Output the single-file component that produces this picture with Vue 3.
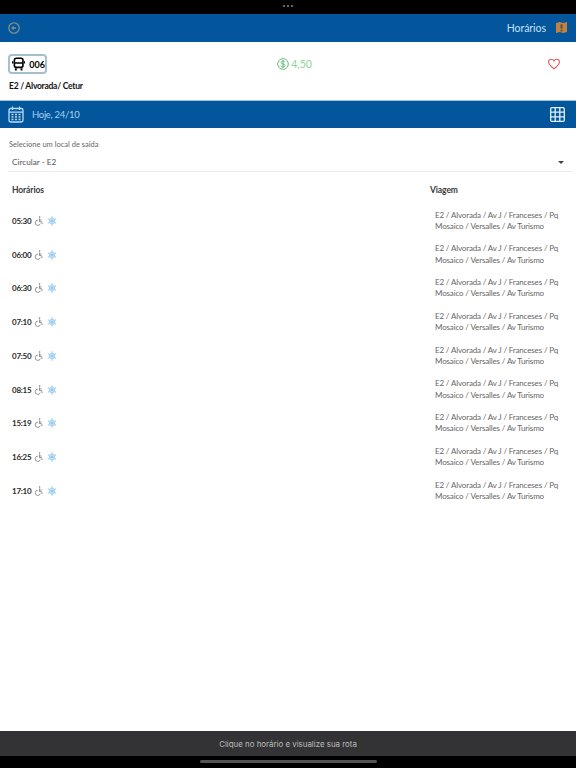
<script setup>
const times = ['05:30','06:00','06:30','07:10','07:50','08:15','15:19','16:25','17:10']
</script>

<template>
  <div class="page">
    <div class="status"><span class="dots"><i></i><i></i><i></i></span></div>
    <header class="nav">
      <svg class="back" width="12" height="12" viewBox="0 0 12 12" fill="none" stroke="#7f9088" stroke-width="1.300">
        <circle cx="6" cy="6" r="5.200"/>
        <path d="M8 6H4.200M5.600 4.500 4.100 6l1.500 1.500"/>
      </svg>
      <span class="nav-title">Horários</span>
      <svg width="11" height="11" viewBox="0 0 11 11">
        <path d="M0 1 3.600 0 7.400 1 11 0v10L7.400 11 3.600 10 0 11z" fill="#c2813f"/>
        <path d="M4.600 2.200h1.800v4.600H4.600zM4.600 7.800h1.800v1.600H4.600z" fill="#4a4f50"/>
      </svg>
    </header>

    <section class="route">
      <div class="route-top">
        <div class="badge">
          <svg width="14" height="14" viewBox="0 0 14 14" fill="none" stroke="#000" stroke-width="1.700">
            <rect x="2.500" y="1" width="9" height="9.500" rx="2"/>
            <path d="M2.500 6h9M.6 4v2.500M13.400 4v2.500"/>
            <path d="M3 12.600h2M9 12.600h2" stroke-width="2.200"/>
          </svg>
          <span>006</span>
        </div>
        <div class="price">
          <svg width="12" height="12" viewBox="0 0 12 12" fill="none" stroke="#62bd74" stroke-width="1">
            <circle cx="6" cy="6" r="5.300"/>
            <path d="M7.900 4.200C7.500 3.300 6.800 3 6 3c-1.100 0-1.900.6-1.900 1.500C4.100 6.400 8 5.500 8 7.500 8 8.400 7.100 9 6 9c-.9 0-1.700-.4-2-1.300M6 2v8"/>
          </svg>
          <span>4,50</span>
        </div>
        <svg class="heart" width="12" height="12" viewBox="0 0 12 12" fill="none" stroke="#e0595a" stroke-width="1.100">
          <path d="M6 10.800C3 8.400.6 6.600.6 4 .6 2.400 1.800 1.200 3.300 1.200 4.400 1.200 5.400 1.800 6 2.900 6.600 1.800 7.600 1.200 8.700 1.200 10.200 1.200 11.400 2.400 11.400 4 11.400 6.600 9 8.400 6 10.800z"/>
        </svg>
      </div>
      <div class="route-name">E2 / Alvorada/ Cetur</div>
    </section>

    <div class="datebar">
      <svg width="16" height="17" viewBox="0 0 16 17" fill="none" stroke="#b9dcf5" stroke-width="1.300">
        <rect x="1" y="2.500" width="14" height="13.500" rx="1.800"/>
        <path d="M1 6.200h14M4.500.6v3.400M11.500.6v3.400"/>
        <path d="M3.500 8.500h2M7 8.500h2M10.500 8.500h2M3.500 11h2M7 11h2M10.500 11h2M3.500 13.500h2M7 13.500h2M10.500 13.500h2" stroke-width="1.500"/>
      </svg>
      <span class="date">Hoje, 24/10</span>
      <svg class="grid" width="15" height="15" viewBox="0 0 15 15" fill="none" stroke="#e3f1fb" stroke-width="1.300">
        <rect x=".7" y=".7" width="13.600" height="13.600" rx="1.200"/>
        <path d="M5.200.7v13.600M9.800.7v13.600M.7 5.200h13.600M.7 9.800h13.600"/>
      </svg>
    </div>

    <section class="selector">
      <div class="sel-label">Selecione um local de saída</div>
      <div class="sel-box">
        <span>Circular - E2</span>
        <span class="caret"></span>
      </div>
    </section>

    <div class="table-head">
      <span>Horários</span>
      <span class="head-trip">Viagem</span>
    </div>

    <div class="rows">
      <div class="row" v-for="t in times" :key="t">
        <div class="time">
          <span class="t">{{ t }}</span>
          <svg width="9" height="10" viewBox="0 0 9 10" fill="none" stroke="#777" stroke-width=".8">
            <circle cx="5.600" cy="1" r=".8" fill="#777" stroke="none"/>
            <path d="M5.600 2.400 5.400 5.600H7.400L8.300 8M5.500 4H7.500"/>
            <path d="M3.800 4.200A2.600 2.600 0 1 0 6.300 7.600"/>
          </svg>
          <svg width="10" height="10" viewBox="0 0 10 10" fill="none" stroke="#8cc4ef" stroke-width="1">
            <path d="M5 .3v9.400M.9 2.650l8.200 4.700M.9 7.350l8.200-4.700"/>
            <circle cx="5" cy="5" r="2.600" stroke-width="1.200" stroke="#a9d4f4"/>
          </svg>
        </div>
        <div class="trip">E2 / Alvorada / Av J / Franceses / Pq<br>Mosaico / Versalles / Av Turismo</div>
      </div>
    </div>

    <div class="spacer"></div>

    <div class="hint">Clique no horário e visualize sua rota</div>
    <div class="home"><i></i></div>
  </div>
</template>

<style>
html, body { margin: 0; background: #fff; }
</style>

<style scoped>
.page {
  width: 576px;
  height: 768px;
  display: flex;
  flex-direction: column;
  font-family: Lato, sans-serif;
  overflow: hidden;
  background: #fff;
}
.status {
  height: 14px;
  background: #000;
  display: flex;
  justify-content: center;
  align-items: flex-start;
  padding-top: 5px;
  box-sizing: border-box;
}
.dots { display: flex; gap: 2px; }
.dots i { width: 2px; height: 2px; border-radius: 50%; background: #8a8a8a; }
.nav {
  height: 28px;
  background: #03569b;
  display: flex;
  align-items: center;
  padding: 0 9px 1px 8px;
  box-sizing: border-box;
  flex: none;
}
.nav-title { margin-left: auto; margin-right: 10px; font-size: 10.500px; letter-spacing: -.05px; color: #c3e0f5; }
.route { height: 58px; padding: 12px 8px 0; box-sizing: border-box; flex: none; }
.route-top { display: flex; align-items: center; justify-content: space-between; }
.badge {
  width: 39px;
  height: 20px;
  border: 2px solid #a4c0cc;
  border-radius: 4px;
  display: flex;
  align-items: center;
  gap: 4px;
  padding-left: 2px;
  box-sizing: border-box;
  font-size: 9px;
  font-weight: 700;
  color: #000;
}
.price { display: flex; align-items: center; gap: 2px; font-size: 10.500px; color: #8ed29a; margin-left: -6px; }
.heart { margin-right: 8px; }
.route-name { margin: 6px 0 0 1px; font-size: 8.500px; line-height: 12px; font-weight: 700; letter-spacing: -.25px; color: #111; }
.datebar {
  height: 28px;
  border-top: 1px solid #9cc3e0;
  background: #03569b;
  display: flex;
  align-items: center;
  padding: 0 11px 0 8px;
  box-sizing: border-box;
  flex: none;
}
.date { margin-left: 8px; font-size: 9.500px; letter-spacing: -.3px; color: #a9d2f0; }
.grid { margin-left: auto; }
.selector { padding: 11px 3px 0 9px; flex: none; }
.sel-label { font-size: 7.500px; line-height: 11px; color: #666; }
.sel-box {
  display: flex;
  align-items: center;
  justify-content: space-between;
  height: 20px;
  margin: 2px 0 0 -1px;
  padding: 1px 9px 0 4px;
  box-sizing: border-box;
  border-bottom: 1px solid #ececec;
  font-size: 8.200px;
  color: #555;
}
.caret { border: 3px solid transparent; border-top: 3px solid #444; border-bottom: 0; }
.table-head {
  display: grid;
  grid-template-columns: 430px 1fr;
  padding: 0 0 0 12px;
  margin-top: 12px;
  font-size: 8.500px;
  letter-spacing: -.1px;
  line-height: 13px;
  font-weight: 700;
  color: #3a3a3a;
  flex: none;
}
.head-trip { margin-left: -12px; }
.rows { margin-top: 7px; flex: none; }
.row {
  display: grid;
  grid-template-columns: 435px 1fr;
  height: 33.750px;
  align-items: center;
  padding-left: 12px;
}
.time { display: flex; align-items: center; gap: 4px; margin-right: 12px; font-size: 8px; letter-spacing: -.25px; font-weight: 700; color: #2a2a2a; }
.t { width: 18px; white-space: nowrap; }
.trip { margin-left: -12px; font-size: 8px; letter-spacing: -.15px; line-height: 11.300px; color: #666; white-space: nowrap; }
.spacer { flex: 1; }
.hint {
  height: 25px;
  background: #333335;
  color: #bdbdbd;
  font-family: Inter, sans-serif;
  font-size: 7.900px;
  display: flex;
  align-items: center;
  justify-content: center;
  flex: none;
}
.home {
  height: 12px;
  background: #000;
  display: flex;
  justify-content: center;
  align-items: flex-start;
  padding-top: 4px;
  box-sizing: border-box;
  flex: none;
}
.home i { width: 177px; height: 3px; border-radius: 2px; background: #555; }
</style>
